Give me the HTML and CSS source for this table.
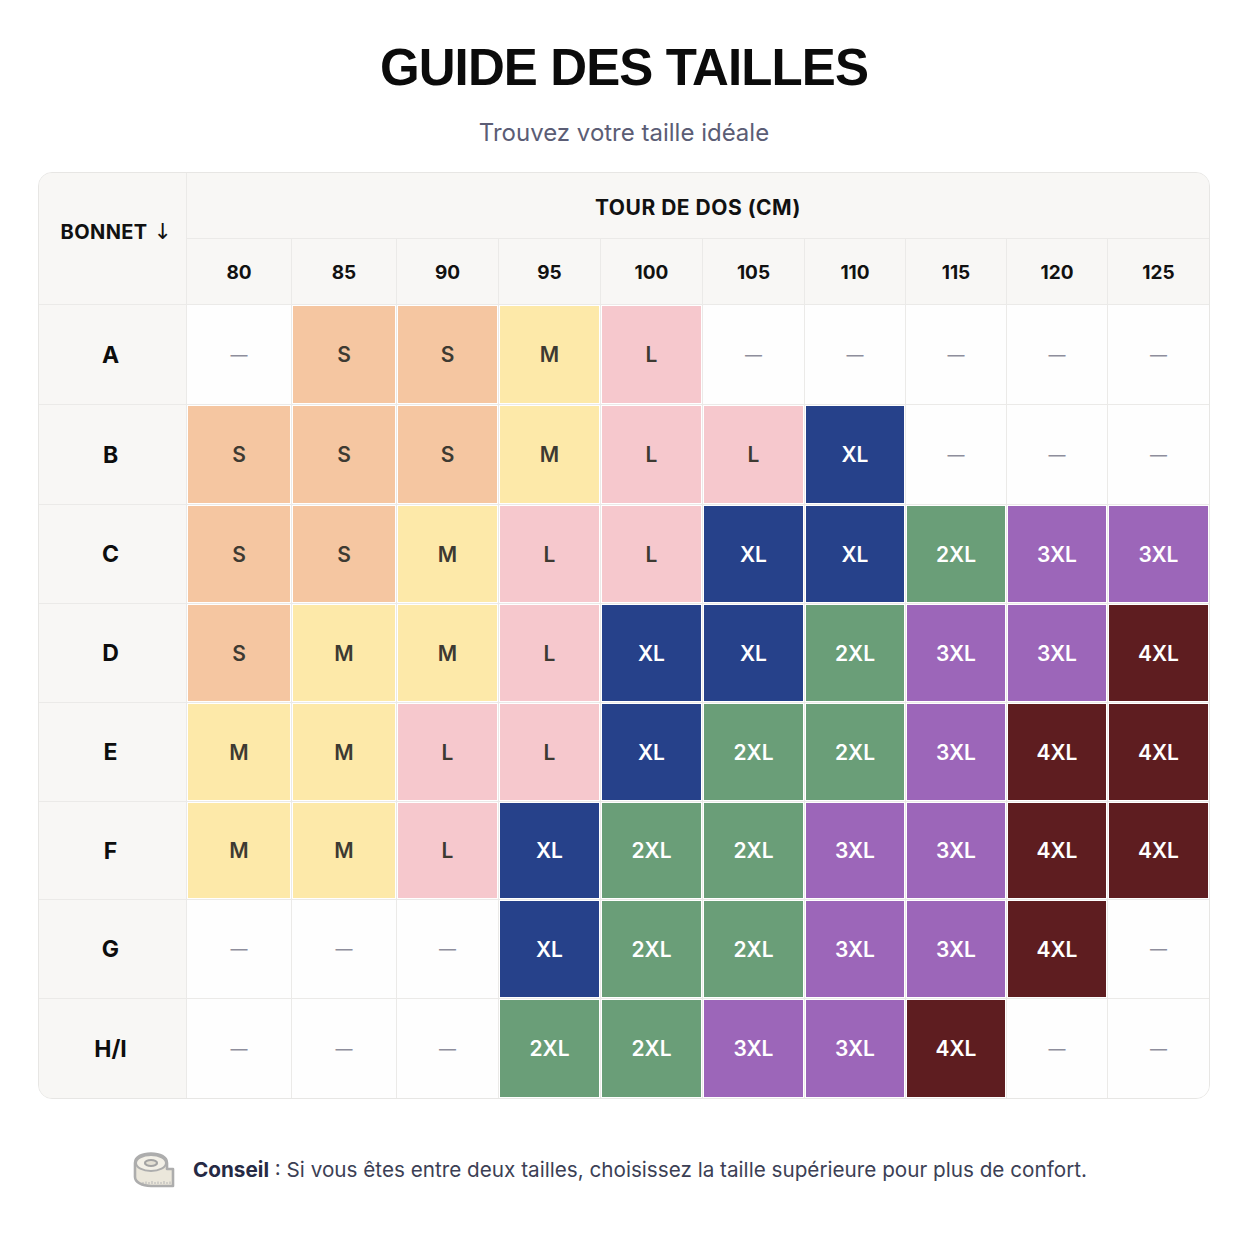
FILE: index.html
```html
<!DOCTYPE html>
<html lang="fr">
<head>
<meta charset="utf-8">
<title>Guide des tailles</title>
<link rel="stylesheet" href="styles.css">
</head>
<body>
<main class="page">
  <header class="intro">
    <h1 class="title">GUIDE DES TAILLES</h1>
    <p class="subtitle">Trouvez votre taille idéale</p>
  </header>

  <section class="card">
    <div class="grid">
      <div class="h-corner">BONNET <span class="arrow">↓</span></div>
      <div class="h-top">TOUR DE DOS (CM)</div>
      <div class="h-num">80</div><div class="h-num">85</div><div class="h-num">90</div><div class="h-num">95</div><div class="h-num">100</div><div class="h-num">105</div><div class="h-num">110</div><div class="h-num">115</div><div class="h-num">120</div><div class="h-num">125</div>

      <div class="r-lab">A</div>
      <div class="c none">—</div><div class="c s">S</div><div class="c s">S</div><div class="c m">M</div><div class="c l">L</div><div class="c none">—</div><div class="c none">—</div><div class="c none">—</div><div class="c none">—</div><div class="c none">—</div>

      <div class="r-lab">B</div>
      <div class="c s">S</div><div class="c s">S</div><div class="c s">S</div><div class="c m">M</div><div class="c l">L</div><div class="c l">L</div><div class="c xl">XL</div><div class="c none">—</div><div class="c none">—</div><div class="c none">—</div>

      <div class="r-lab">C</div>
      <div class="c s">S</div><div class="c s">S</div><div class="c m">M</div><div class="c l">L</div><div class="c l">L</div><div class="c xl">XL</div><div class="c xl">XL</div><div class="c x2">2XL</div><div class="c x3">3XL</div><div class="c x3">3XL</div>

      <div class="r-lab">D</div>
      <div class="c s">S</div><div class="c m">M</div><div class="c m">M</div><div class="c l">L</div><div class="c xl">XL</div><div class="c xl">XL</div><div class="c x2">2XL</div><div class="c x3">3XL</div><div class="c x3">3XL</div><div class="c x4">4XL</div>

      <div class="r-lab">E</div>
      <div class="c m">M</div><div class="c m">M</div><div class="c l">L</div><div class="c l">L</div><div class="c xl">XL</div><div class="c x2">2XL</div><div class="c x2">2XL</div><div class="c x3">3XL</div><div class="c x4">4XL</div><div class="c x4">4XL</div>

      <div class="r-lab">F</div>
      <div class="c m">M</div><div class="c m">M</div><div class="c l">L</div><div class="c xl">XL</div><div class="c x2">2XL</div><div class="c x2">2XL</div><div class="c x3">3XL</div><div class="c x3">3XL</div><div class="c x4">4XL</div><div class="c x4">4XL</div>

      <div class="r-lab">G</div>
      <div class="c none">—</div><div class="c none">—</div><div class="c none">—</div><div class="c xl">XL</div><div class="c x2">2XL</div><div class="c x2">2XL</div><div class="c x3">3XL</div><div class="c x3">3XL</div><div class="c x4">4XL</div><div class="c none">—</div>

      <div class="r-lab">H/I</div>
      <div class="c none">—</div><div class="c none">—</div><div class="c none">—</div><div class="c x2">2XL</div><div class="c x2">2XL</div><div class="c x3">3XL</div><div class="c x3">3XL</div><div class="c x4">4XL</div><div class="c none">—</div><div class="c none">—</div>
    </div>
  </section>

  <footer class="tip">
    <svg class="tape" width="44" height="40" viewBox="0 0 44 40" aria-hidden="true">
      <path d="M3 13 C3 7 10 3.5 19 3.5 C28 3.5 35 7 35 13 L35 19 L41 19 L41 36 L19 36 C10 36 3 32 3 27 Z" fill="#ebe7db" stroke="#adadad" stroke-width="2.6" stroke-linejoin="round"/>
      <ellipse cx="19" cy="13" rx="15" ry="8" fill="#f3f0e7" stroke="#adadad" stroke-width="2"/>
      <ellipse cx="19" cy="13" rx="6" ry="3" fill="#e4e0d4" stroke="#a3a3a3" stroke-width="2.2"/>
      <path d="M11 34 v-2 M14 34 v-2.5 M17 34 v-2 M20 34 v-3 M23 34 v-2 M26 34 v-2.5 M29 34 v-2 M32 34 v-3 M35 34 v-2 M38 34 v-2.5" stroke="#b5b5b5" stroke-width="1"/>
    </svg>
    <p class="tip-text"><strong>Conseil</strong> : Si vous êtes entre deux tailles, choisissez la taille supérieure pour plus de confort.</p>
  </footer>
</main>
</body>
</html>
```

FILE: styles.css
```css
* { box-sizing: border-box; }

html, body {
  margin: 0;
  padding: 0;
  background: #ffffff;
}

body {
  font-family: Inter, "Noto Sans", "Liberation Sans", sans-serif;
  color: #111;
}

.page {
  width: 1254px;
  padding: 36px 0 0 38px;
}

.intro {
  width: 1172px;
  display: flex;
  flex-direction: column;
  align-items: center;
}

.title {
  margin: 0;
  font-family: "Liberation Sans", Arial, sans-serif;
  font-weight: 700;
  font-size: 51px;
  line-height: 64px;
  letter-spacing: -0.9px;
  color: #0b0b0b;
}

.subtitle {
  margin: 19px 0 0;
  font-size: 24px;
  line-height: 28px;
  color: #5b5d75;
  font-weight: 400;
}

.card {
  margin-top: 25px;
  width: 1172px;
  border: 1px solid #e7e6e4;
  border-radius: 14px;
  overflow: hidden;
  background: #e9e8e6;
}

.grid {
  display: grid;
  grid-template-columns: 147px 104px 104px 101px 101px 101px 101px 100px 100px 100px 101px;
  grid-template-rows: 65px 65px 99px 99px 98px 98px 98px 97px 98px 99px;
  gap: 1px;
  background: #ebeae8;
}

.h-corner {
  grid-row: 1 / span 2;
  grid-column: 1;
  background: #f8f7f5;
  display: flex;
  align-items: center;
  justify-content: center;
  gap: 6px;
  font-weight: 700;
  font-size: 20px;
  letter-spacing: 0.4px;
  color: #111;
  padding: 0 0 14px 8px;
}

.arrow {
  font-family: "DejaVu Sans", sans-serif;
  font-weight: 400;
  font-size: 22px;
}

.h-top {
  grid-row: 1;
  grid-column: 2 / span 10;
  background: #f8f7f5;
  display: flex;
  align-items: center;
  justify-content: center;
  font-weight: 700;
  font-size: 21px;
  letter-spacing: 0.5px;
  color: #111;
  padding-top: 4px;
}

.h-num {
  background: #f8f7f5;
  display: flex;
  align-items: center;
  justify-content: center;
  font-weight: 700;
  font-size: 19px;
  color: #111;
  padding-top: 2px;
}

.r-lab {
  background: #f8f7f5;
  display: flex;
  align-items: center;
  justify-content: center;
  font-weight: 700;
  font-size: 23px;
  color: #0d0d0d;
  padding-right: 4px;
}

.c {
  display: flex;
  align-items: center;
  justify-content: center;
  font-size: 21px;
  font-weight: 600;
  background: #ffffff;
}

.c.none {
  color: #8e8e9c;
  font-weight: 400;
  font-size: 17px;
  background: #fefefe;
}

.c.s, .c.m, .c.l, .c.xl, .c.x2, .c.x3, .c.x4 {
  box-shadow: inset 0 0 0 1px #ffffff;
}

.c.s  { background: #f5c6a1; color: #3d3a32; }
.c.m  { background: #fde9a9; color: #3d3a32; }
.c.l  { background: #f6c8cd; color: #3d3a32; }
.c.xl { background: #26418a; color: #ffffff; }
.c.x2 { background: #6a9e78; color: #ffffff; }
.c.x3 { background: #9c66b9; color: #ffffff; }
.c.x4 { background: #5e1d20; color: #ffffff; }

.tip {
  margin-top: 51px;
  width: 1172px;
  display: flex;
  align-items: center;
  padding-left: 94px;
  gap: 17px;
}

.tape {
  flex: none;
}

.tip-text {
  margin: 0;
  font-size: 20.7px;
  line-height: 26px;
  color: #3c3f55;
}

.tip-text strong {
  color: #262a44;
  font-weight: 700;
}
```
